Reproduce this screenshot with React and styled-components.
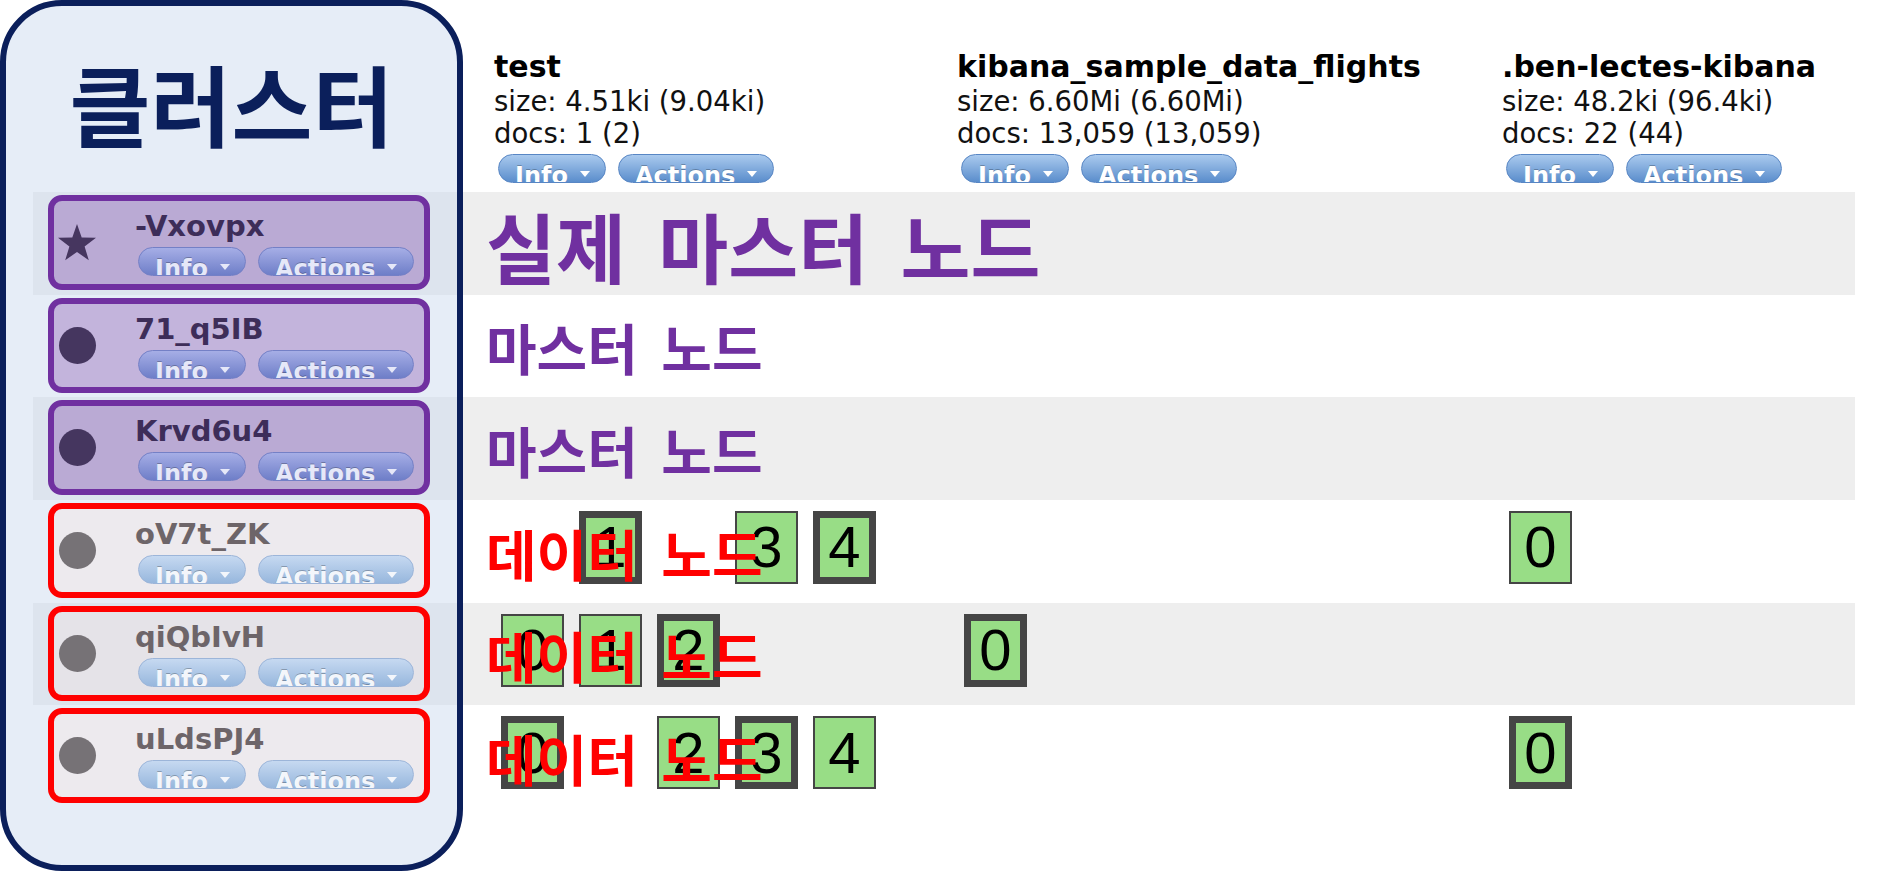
import React from "react";
import styled, { createGlobalStyle } from "styled-components";

const GlobalStyle = createGlobalStyle`
  html, body {
    margin: 0;
    padding: 0;
    background: #fff;
  }
  body {
    width: 1881px;
    height: 871px;
    overflow: hidden;
    font-family: "DejaVu Sans", Verdana, sans-serif;
  }
`;

const indices = [
  { name: "test", size: "4.51ki (9.04ki)", docs: "1 (2)" },
  {
    name: "kibana_sample_data_flights",
    size: "6.60Mi (6.60Mi)",
    docs: "13,059 (13,059)",
  },
  { name: ".ben-lectes-kibana", size: "48.2ki (96.4ki)", docs: "22 (44)" },
];

// p = primary, r = replica, null = empty slot
const nodes = [
  { name: "-Vxovpx", role: "master", elected: true, label: "실제 마스터 노드", big: true },
  { name: "71_q5IB", role: "master", label: "마스터 노드" },
  { name: "Krvd6u4", role: "master", label: "마스터 노드" },
  {
    name: "oV7t_ZK",
    role: "data",
    label: "데이터 노드",
    shards: [[null, "p", null, "r", "p"], [], ["r"]],
  },
  {
    name: "qiQbIvH",
    role: "data",
    label: "데이터 노드",
    shards: [["r", "r", "p"], ["p"], []],
  },
  {
    name: "uLdsPJ4",
    role: "data",
    label: "데이터 노드",
    shards: [["p", null, "r", "p", "r"], [], ["p"]],
  },
];

const tones = {
  plain: { top: "#aacaee", bottom: "#5a8dcc", border: "#5886c4", text: "#ffffff" },
  master: { top: "#a6aee6", bottom: "#6e7ec8", border: "#7480c6", text: "#e6e8f8" },
  data: { top: "#c6d9f1", bottom: "#97b7dd", border: "#9cb5d9", text: "#f3f6fb" },
};

const Page = styled.div`
  position: relative;
  width: 1881px;
  height: 871px;
`;

const Table = styled.div`
  display: flex;
  flex-direction: column;
  margin-left: 33px;
  width: 1822px;
`;

const Row = styled.div`
  display: grid;
  grid-template-columns: 453px 463px 545px 361px;
  height: ${(p) => (p.$header ? "192px" : "102.67px")};
  background: ${(p) => (p.$striped ? "#eeeeee" : "transparent")};
`;

const HeaderCell = styled.div`
  padding: 49px 0 0 8px;
  white-space: nowrap;
`;

const IndexName = styled.div`
  font-weight: bold;
  font-size: 30px;
  line-height: 36px;
  color: #000;
`;

const IndexStat = styled.div`
  font-size: 27.5px;
  line-height: 32px;
  color: #111;
`;

const ButtonBar = styled.div`
  display: flex;
  gap: 12px;
  margin: ${(p) => (p.$inNode ? "6px 0 0 0" : "5px 0 0 4px")};
`;

const PillButton = styled.div`
  display: flex;
  align-items: flex-start;
  box-sizing: border-box;
  width: ${(p) => (p.$wide ? "156px" : "108px")};
  height: 29px;
  padding: 7px 0 0 16px;
  border: 1px solid ${(p) => tones[p.$tone].border};
  border-radius: 15px;
  background: linear-gradient(
    to bottom,
    ${(p) => tones[p.$tone].top},
    ${(p) => tones[p.$tone].bottom}
  );
  overflow: hidden;
  color: ${(p) => tones[p.$tone].text};
  font-weight: bold;
  font-size: 24px;
  line-height: 28px;
  text-shadow: 0 -1px 0 rgba(0, 0, 0, 0.25);
`;

const Caret = styled.span`
  flex: none;
  width: 0;
  height: 0;
  margin: 9px 0 0 12px;
  border-left: 5px solid transparent;
  border-right: 5px solid transparent;
  border-top: 6px solid currentColor;
`;

const NodeCell = styled.div`
  padding: 3px 0 0 15px;
`;

const NodeBox = styled.div`
  position: relative;
  z-index: 3;
  display: flex;
  align-items: center;
  box-sizing: border-box;
  width: 382px;
  height: 95px;
  border: 6px solid ${(p) => (p.$role === "master" ? "#7030a0" : "#ff0000")};
  border-radius: 14px;
  background: ${(p) =>
    p.$role === "master"
      ? p.$striped
        ? "#baaad4"
        : "#c3b4dc"
      : p.$striped
      ? "#e5e3e8"
      : "#edeaee"};
`;

const IconSlot = styled.div`
  flex: none;
  display: flex;
  justify-content: center;
  width: 46px;
`;

const Dot = styled.div`
  width: 37px;
  height: 37px;
  border-radius: 50%;
  background: ${(p) => (p.$role === "master" ? "#45365f" : "#767276")};
`;

const NodeInfo = styled.div`
  align-self: flex-start;
  padding-top: 10px;
  margin-left: 38px;
`;

const NodeName = styled.div`
  margin-left: -3px;
  font-weight: bold;
  font-size: 29px;
  line-height: 30px;
  color: ${(p) => (p.$role === "master" ? "#3d2d59" : "#6d6569")};
  white-space: nowrap;
`;

const IndexCell = styled.div`
  display: grid;
  align-items: center;
  & > * {
    grid-area: 1 / 1;
  }
`;

const ShardList = styled.div`
  display: flex;
  gap: 15px;
  align-self: start;
  margin-top: 11px;
  padding-left: 15px;
`;

const Shard = styled.div`
  display: flex;
  align-items: center;
  justify-content: center;
  box-sizing: border-box;
  width: 63px;
  height: 73px;
  border: ${(p) => (p.$primary ? "7px" : "2px")} solid #454545;
  background: #98dd86;
  visibility: ${(p) => (p.$empty ? "hidden" : "visible")};
  font-family: "Liberation Sans", Arial, sans-serif;
  font-size: 58px;
  line-height: 1;
  color: #000;
`;

const RowLabel = styled.div`
  position: relative;
  margin-top: ${(p) => (p.$big ? "4px" : "2px")};
  font-family: "Noto Sans CJK KR", sans-serif;
  font-weight: 700;
  font-size: ${(p) => (p.$big ? "76px" : "55px")};
  line-height: 1;
  word-spacing: 0.2em;
  white-space: nowrap;
  color: ${(p) => (p.$role === "master" ? "#7030a0" : "#ff0000")};
`;

const Panel = styled.div`
  position: absolute;
  top: 0;
  left: 0;
  z-index: 2;
  box-sizing: border-box;
  width: 463px;
  height: 871px;
  border: 6px solid #0b1f5b;
  border-radius: 62px;
  background: rgba(200, 215, 238, 0.45);
  pointer-events: none;
`;

const PanelTitle = styled.div`
  margin-top: 52px;
  font-family: "Noto Sans CJK KR", sans-serif;
  font-weight: 700;
  font-size: 88px;
  line-height: 1;
  text-align: center;
  color: #0b1f5b;
`;

function Star() {
  return (
    <svg width="40" height="39" viewBox="0 0 40 39">
      <polygon
        fill="#46365f"
        points="20,1 24.7,14.5 39,14.8 27.6,23.5 31.8,37.2 20,29 8.2,37.2 12.4,23.5 1,14.8 15.3,14.5"
      />
    </svg>
  );
}

function Buttons({ tone, inNode }) {
  return (
    <ButtonBar $inNode={inNode}>
      <PillButton $tone={tone}>
        Info
        <Caret />
      </PillButton>
      <PillButton $tone={tone} $wide>
        Actions
        <Caret />
      </PillButton>
    </ButtonBar>
  );
}

function NodeRow({ node, striped }) {
  const shards = node.shards || [[], [], []];
  return (
    <Row $striped={striped}>
      <NodeCell>
        <NodeBox $role={node.role} $striped={striped}>
          <IconSlot>{node.elected ? <Star /> : <Dot $role={node.role} />}</IconSlot>
          <NodeInfo>
            <NodeName $role={node.role}>{node.name}</NodeName>
            <Buttons tone={node.role} inNode />
          </NodeInfo>
        </NodeBox>
      </NodeCell>
      {shards.map((list, i) => (
        <IndexCell key={i}>
          {list.length > 0 && (
            <ShardList>
              {list.map((kind, n) => (
                <Shard key={n} $primary={kind === "p"} $empty={!kind}>
                  {n}
                </Shard>
              ))}
            </ShardList>
          )}
          {i === 0 && (
            <RowLabel $role={node.role} $big={node.big}>
              {node.label}
            </RowLabel>
          )}
        </IndexCell>
      ))}
    </Row>
  );
}

export default function App() {
  return (
    <Page>
      <GlobalStyle />
      <Table>
        <Row $header>
          <div />
          {indices.map((idx) => (
            <HeaderCell key={idx.name}>
              <IndexName>{idx.name}</IndexName>
              <IndexStat>size: {idx.size}</IndexStat>
              <IndexStat>docs: {idx.docs}</IndexStat>
              <Buttons tone="plain" />
            </HeaderCell>
          ))}
        </Row>
        {nodes.map((node, i) => (
          <NodeRow key={node.name} node={node} striped={i % 2 === 0} />
        ))}
      </Table>
      <Panel>
        <PanelTitle>클러스터</PanelTitle>
      </Panel>
    </Page>
  );
}
